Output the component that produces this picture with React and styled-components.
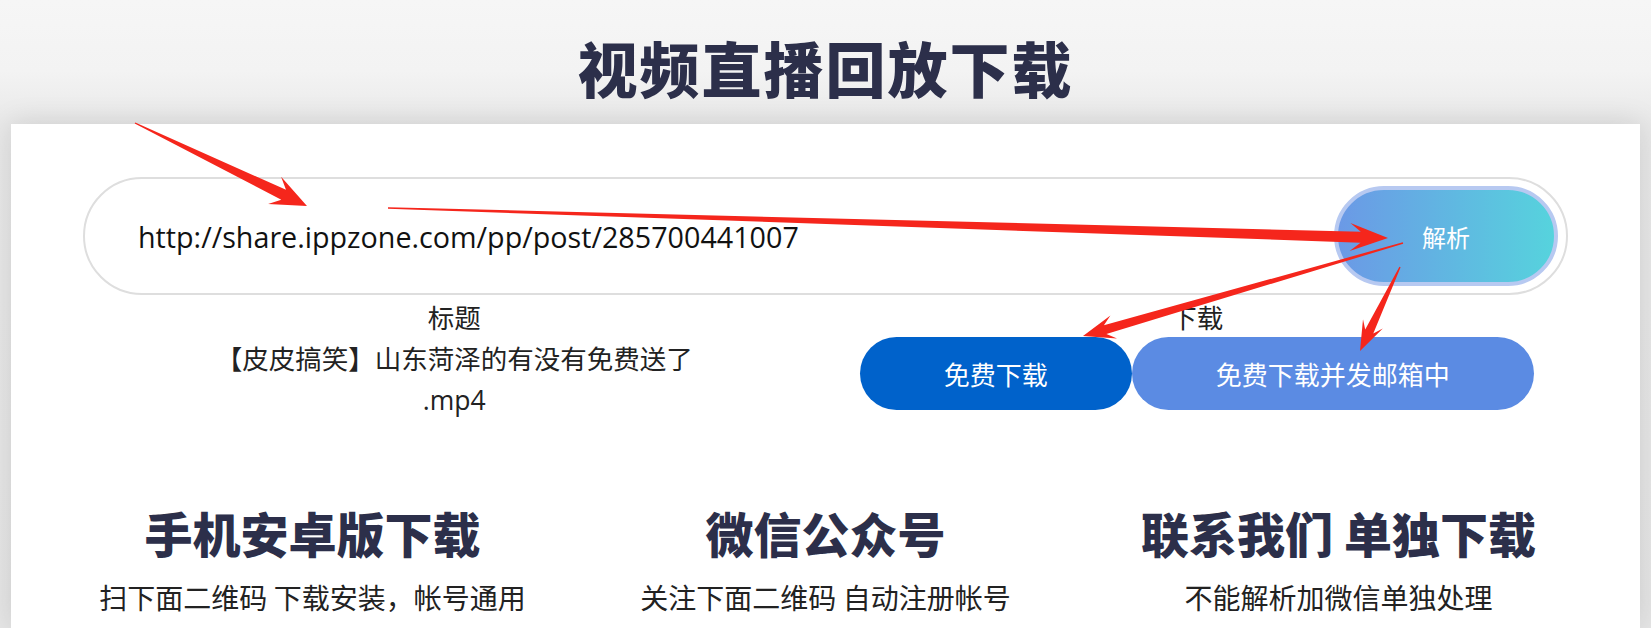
import React from 'react';
import styled, { createGlobalStyle } from 'styled-components';

const GlobalStyle = createGlobalStyle`
  html, body {
    margin: 0;
    padding: 0;
    background: #f3f3f3;
  }
  body {
    font-family: "Open Sans", "Noto Sans CJK SC", sans-serif;
    color: #222;
  }
`;

const Page = styled.div`
  position: relative;
  width: 1651px;
  height: 628px;
  overflow: hidden;
  background: linear-gradient(#f6f6f6 0, #f3f3f3 70px, #e9e9e9 124px, #e6e6e6 100%);
`;

const Header = styled.header`
  box-sizing: border-box;
  height: 124px;
  padding-top: 10px;
  display: flex;
  align-items: center;
  justify-content: center;
`;

const Title = styled.h1`
  margin: 0;
  font-family: "Noto Sans CJK SC", sans-serif;
  font-weight: 900;
  font-size: 60px;
  letter-spacing: 2px;
  line-height: 1;
  color: #2c2f4a;
`;

const Card = styled.main`
  box-sizing: border-box;
  margin: 0 11px;
  min-height: 504px;
  padding: 53px 45px 0;
  background: #fff;
  box-shadow: 0 0 28px rgba(0, 0, 0, 0.13);
`;

const SearchArea = styled.section`
  padding: 0 27px;
`;

const SearchBar = styled.form`
  box-sizing: border-box;
  height: 118px;
  display: flex;
  align-items: center;
  padding: 0 8px 0 53px;
  border: 2px solid #dedede;
  border-radius: 60px;
`;

const UrlInput = styled.input`
  flex: 1;
  min-width: 0;
  border: none;
  outline: none;
  background: transparent;
  font-family: "Open Sans", "Noto Sans CJK SC", sans-serif;
  font-size: 28.7px;
  color: #111;
  padding: 0;
`;

const ParseButton = styled.button`
  box-sizing: border-box;
  width: 224px;
  height: 100px;
  border: 4px solid #b7c9f1;
  border-radius: 50px;
  background: linear-gradient(90deg, #6b99e6, #56d3dd);
  color: #fff;
  font-family: "Noto Sans CJK SC", sans-serif;
  font-size: 24px;
  cursor: pointer;
`;

const Result = styled.div`
  display: grid;
  grid-template-columns: 1fr 1fr;
  margin-top: 3px;
`;

const ResultCol = styled.div`
  display: flex;
  flex-direction: column;
  align-items: center;
  text-align: center;
  font-family: "Open Sans", "Noto Sans CJK SC", sans-serif;
  font-size: 26.5px;
  line-height: 41px;
  color: #222;
`;

const FileName = styled.div`
  max-width: 512px;
`;

const ButtonRow = styled.div`
  display: flex;
  margin-top: -2px;
`;

const DownloadButton = styled.button`
  height: 73px;
  padding: 0 84px;
  border: none;
  border-radius: 37px;
  background: ${(p) => (p.$light ? '#5b8be3' : '#0062cb')};
  color: #fff;
  font-family: "Noto Sans CJK SC", sans-serif;
  font-size: 26px;
  cursor: pointer;
`;

const Features = styled.section`
  display: grid;
  grid-template-columns: repeat(3, 1fr);
  margin-top: 78px;
`;

const Feature = styled.div`
  text-align: center;
`;

const FeatureTitle = styled.h2`
  margin: 0;
  font-family: "Noto Sans CJK SC", sans-serif;
  font-weight: 900;
  font-size: 48px;
  line-height: 67px;
  color: #2c2f4a;
`;

const FeatureText = styled.p`
  margin: 10px 0 0;
  font-family: "Noto Sans CJK SC", sans-serif;
  font-size: 28px;
  line-height: 42px;
  color: #222;
`;

const Overlay = styled.svg`
  position: absolute;
  left: 0;
  top: 0;
  pointer-events: none;
`;

// tapered annotation arrow, from tail to tip
function arrowPoints([x1, y1], [x2, y2], head = 28, barb = 11, neck = 3.5) {
  const dx = x2 - x1;
  const dy = y2 - y1;
  const len = Math.hypot(dx, dy);
  const ux = dx / len;
  const uy = dy / len;
  const nx = -uy;
  const ny = ux;
  const nb = [x2 - ux * head * 0.72, y2 - uy * head * 0.72];
  const bb = [x2 - ux * head, y2 - uy * head];
  const pts = [
    [x1 + nx * 0.7, y1 + ny * 0.7],
    [nb[0] + nx * neck, nb[1] + ny * neck],
    [bb[0] + nx * barb, bb[1] + ny * barb],
    [x2, y2],
    [bb[0] - nx * barb, bb[1] - ny * barb],
    [nb[0] - nx * neck, nb[1] - ny * neck],
    [x1 - nx * 0.7, y1 - ny * 0.7],
  ];
  return pts.map((p) => p.map((v) => v.toFixed(1)).join(',')).join(' ');
}

const arrows = [
  { from: [135, 123], to: [307, 206], head: 36, barb: 15, neck: 5.5 },
  { from: [388, 208], to: [1388, 238], head: 38, barb: 14, neck: 5.5 },
  { from: [1403, 243], to: [1083, 336], head: 32, barb: 12, neck: 4.5 },
  { from: [1400, 267], to: [1360, 351], head: 30, barb: 11, neck: 4.5 },
];

const features = [
  { title: '手机安卓版下载', text: '扫下面二维码 下载安装，帐号通用' },
  { title: '微信公众号', text: '关注下面二维码 自动注册帐号' },
  { title: '联系我们 单独下载', text: '不能解析加微信单独处理' },
];

const App = () => {
  return (
    <Page>
      <GlobalStyle />
      <Header>
        <Title>视频直播回放下载</Title>
      </Header>
      <Card>
        <SearchArea>
          <SearchBar onSubmit={(e) => e.preventDefault()}>
            <UrlInput readOnly value="http://share.ippzone.com/pp/post/285700441007" />
            <ParseButton type="submit">解析</ParseButton>
          </SearchBar>
          <Result>
            <ResultCol>
              <div>标题</div>
              <FileName>
                【皮皮搞笑】山东菏泽的有没有免费送了<wbr />.mp4
              </FileName>
            </ResultCol>
            <ResultCol>
              <div>下载</div>
              <ButtonRow>
                <DownloadButton>免费下载</DownloadButton>
                <DownloadButton $light>免费下载并发邮箱中</DownloadButton>
              </ButtonRow>
            </ResultCol>
          </Result>
        </SearchArea>
        <Features>
          {features.map((f, i) => (
            <Feature key={i}>
              <FeatureTitle>{f.title}</FeatureTitle>
              <FeatureText>{f.text}</FeatureText>
            </Feature>
          ))}
        </Features>
      </Card>
      <Overlay width="1651" height="628" viewBox="0 0 1651 628">
        {arrows.map((a, i) => (
          <polygon key={i} points={arrowPoints(a.from, a.to, a.head, a.barb, a.neck)} fill="#f5261c" />
        ))}
      </Overlay>
    </Page>
  );
};

export default App;
